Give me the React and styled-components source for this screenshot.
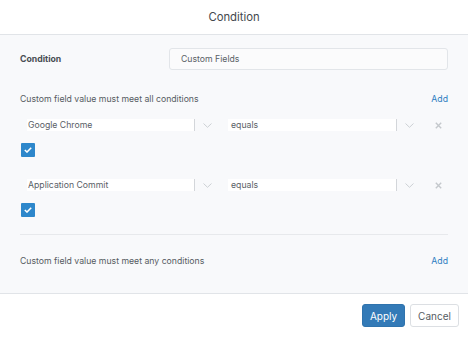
import React from "react";
import styled, { createGlobalStyle } from "styled-components";

const Global = createGlobalStyle`
  html, body { margin: 0; padding: 0; background: #fff; }
  body { font-family: Inter, "Noto Sans", sans-serif; -webkit-font-smoothing: antialiased; }
  * { box-sizing: border-box; }
`;

const Dialog = styled.div`
  width: 468px;
  height: 337px;
  display: flex;
  flex-direction: column;
  background: #fff;
`;

const Header = styled.div`
  height: 35px;
  flex: none;
  display: flex;
  align-items: center;
  justify-content: center;
  border-bottom: 1px solid #e1e4e8;
  font-size: 11.3px;
  color: #43484d;
`;

const Body = styled.div`
  flex: 1;
  background: #f8f9fb;
  padding: 13px 20px 0;
  display: flex;
  flex-direction: column;
`;

const FieldRow = styled.div`
  display: grid;
  grid-template-columns: 149px 1fr;
  align-items: center;
  height: 22px;
`;

const Label = styled.div`
  font-size: 8.7px;
  font-weight: 700;
  color: #474d53;
`;

const TextBox = styled.div`
  height: 22px;
  border: 1px solid #e2e5e9;
  border-radius: 3px;
  background: #fbfbfc;
  display: flex;
  align-items: center;
  padding-left: 11px;
  font-size: 8.7px;
  color: #596066;
`;

const SectionHead = styled.div`
  display: flex;
  justify-content: space-between;
  align-items: center;
  height: 12px;
  margin-top: ${(p) => p.$mt}px;
  font-size: 8.7px;
  color: #555b61;
`;

const AddLink = styled.span`
  color: #2d7cc1;
`;

const RuleRow = styled.div`
  display: flex;
  align-items: center;
  height: 12px;
  padding-left: 7px;
  margin-top: ${(p) => p.$mt}px;
`;

const Select = styled.div`
  display: flex;
  align-items: center;
  width: ${(p) => p.$w}px;
  margin-left: ${(p) => p.$ml || 0}px;
  height: 12px;
`;

const SelectValue = styled.div`
  flex: 1;
  height: 12px;
  background: #fff;
  font-size: 8.7px;
  line-height: 12px;
  color: #596066;
  padding-left: ${(p) => p.$pl}px;
`;

const Indicator = styled.div`
  width: 25px;
  height: 12px;
  border-left: 1px solid #d3d6da;
  display: flex;
  align-items: center;
  justify-content: center;
`;

const Remove = styled.div`
  width: 19px;
  margin-left: 8px;
  display: flex;
  justify-content: center;
  align-items: center;
`;

const Check = styled.div`
  width: 14px;
  height: 14px;
  margin-left: 1px;
  margin-top: ${(p) => p.$mt}px;
  background: #2d87cb;
  border-radius: 1px;
  display: flex;
  align-items: center;
  justify-content: center;
`;

const Divider = styled.div`
  height: 1px;
  background: #e7e9ec;
  margin-top: 17px;
`;

const Footer = styled.div`
  height: 44px;
  flex: none;
  border-top: 1px solid #e1e4e8;
  display: flex;
  justify-content: flex-end;
  align-items: flex-start;
  padding: 10px 9px 0 0;
  gap: 5px;
`;

const Button = styled.button`
  height: 23px;
  padding: 0;
  width: ${(p) => p.$w}px;
  border-radius: 3px;
  font-family: inherit;
  font-size: 10px;
  border: 1px solid ${(p) => (p.$primary ? "#2f73ad" : "#dcdfe3")};
  background: ${(p) => (p.$primary ? "#337ab7" : "#fff")};
  color: ${(p) => (p.$primary ? "#fff" : "#555b61")};
`;

const Chevron = () => (
  <svg width="9" height="5" viewBox="0 0 9 5">
    <path d="M0.5 0.5 L4.5 4.3 L8.5 0.5" fill="none" stroke="#ccd0d4" strokeWidth="1" />
  </svg>
);

const Cross = () => (
  <svg width="7" height="7" viewBox="0 0 7 7">
    <path d="M0.8 0.8 L6.2 6.2 M6.2 0.8 L0.8 6.2" stroke="#c4c8cc" strokeWidth="1.4" />
  </svg>
);

const Tick = () => (
  <svg width="8" height="6" viewBox="0 0 8 6">
    <path d="M0.8 3 L3 5 L7.2 0.8" fill="none" stroke="#fff" strokeWidth="1.6" />
  </svg>
);

const Rule = ({ field, mt }) => (
  <>
    <RuleRow $mt={mt}>
      <Select $w={192}>
        <SelectValue $pl={1}>{field}</SelectValue>
        <Indicator><Chevron /></Indicator>
      </Select>
      <Select $w={193} $ml={9}>
        <SelectValue $pl={3}>equals</SelectValue>
        <Indicator><Chevron /></Indicator>
      </Select>
      <Remove><Cross /></Remove>
    </RuleRow>
    <Check $mt={12}><Tick /></Check>
  </>
);

export default function App() {
  return (
    <>
      <Global />
      <Dialog>
        <Header>Condition</Header>
        <Body>
          <FieldRow>
            <Label>Condition</Label>
            <TextBox>Custom Fields</TextBox>
          </FieldRow>
          <SectionHead $mt={23}>
            <span>Custom field value must meet all conditions</span>
            <AddLink>Add</AddLink>
          </SectionHead>
          <Rule field="Google Chrome" mt={14} />
          <Rule field="Application Commit" mt={22} />
          <Divider />
          <SectionHead $mt={20}>
            <span>Custom field value must meet any conditions</span>
            <AddLink>Add</AddLink>
          </SectionHead>
        </Body>
        <Footer>
          <Button $primary $w={43}>Apply</Button>
          <Button $w={49}>Cancel</Button>
        </Footer>
      </Dialog>
    </>
  );
}
